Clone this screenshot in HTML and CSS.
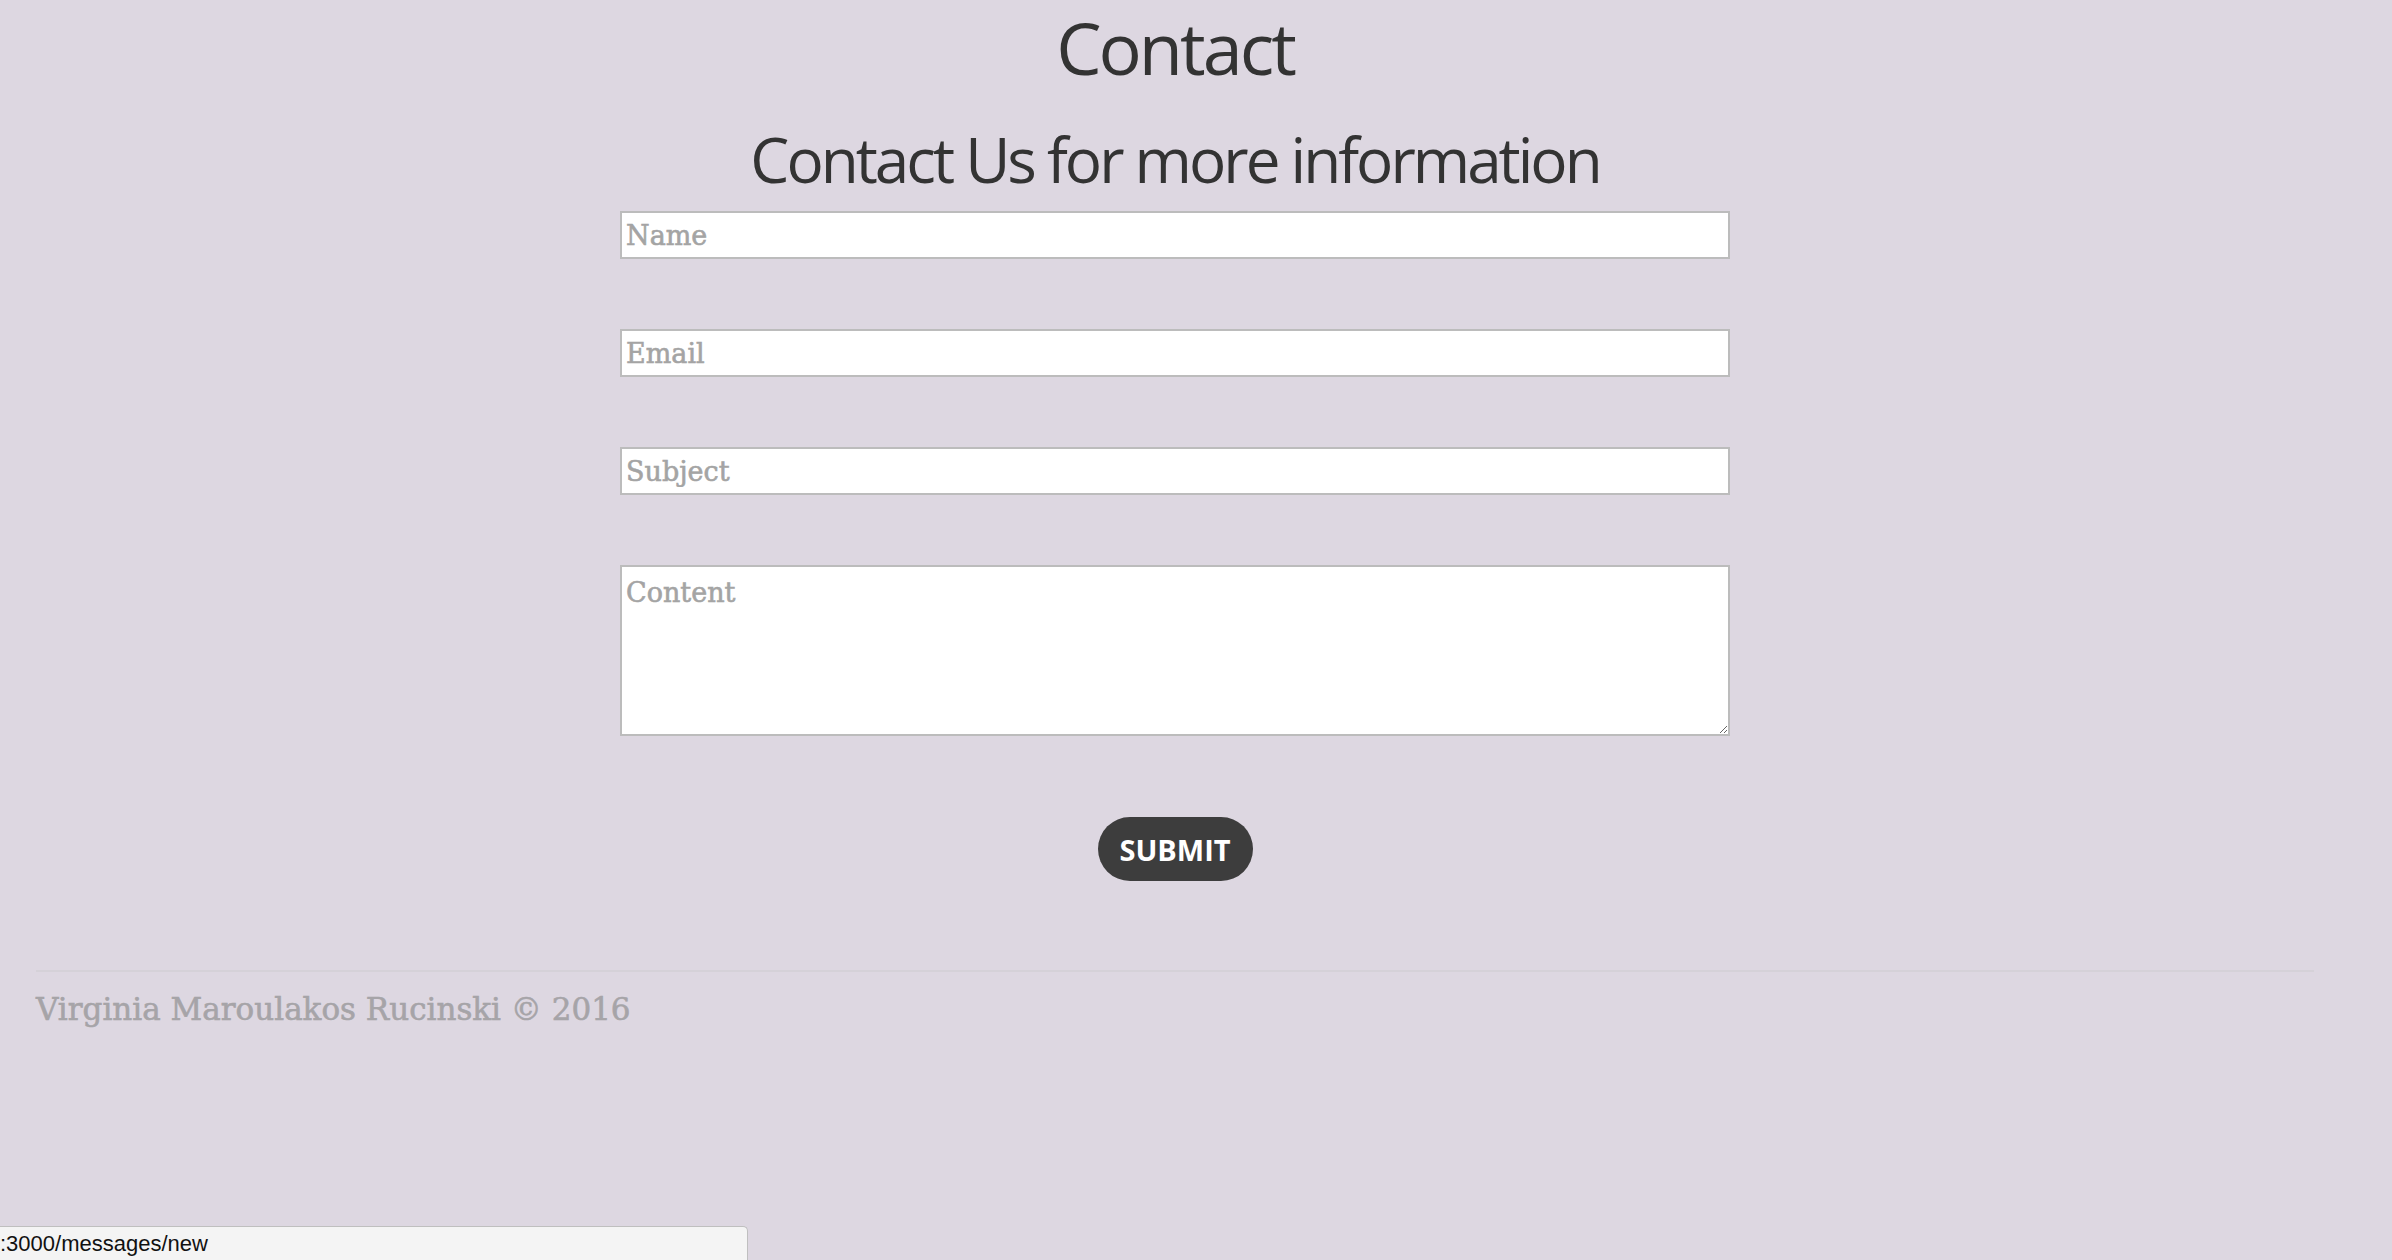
FILE: index.html
```html
<!DOCTYPE html>
<html>
<head>
<meta charset="utf-8">
<link rel="stylesheet" href="styles.css">
</head>
<body>
<div class="page">
  <main class="main">
    <h1 class="title">Contact</h1>
    <h2 class="subtitle">Contact Us for more information</h2>
    <form class="form">
      <input class="field" type="text" placeholder="Name">
      <input class="field" type="email" placeholder="Email">
      <input class="field" type="text" placeholder="Subject">
      <textarea class="field area" placeholder="Content"></textarea>
      <button class="submit" type="button">SUBMIT</button>
    </form>
  </main>
  <footer class="footer">
    <p class="copy">Virginia Maroulakos Rucinski © 2016</p>
  </footer>
</div>
<div class="status">:3000/messages/new</div>
</body>
</html>
```

FILE: styles.css
```css
html, body {
  margin: 0;
  padding: 0;
  background: #ddd7e1;
  height: 100%;
  overflow: hidden;
}
.page {
  width: 2350px;
}
.main {
  display: flex;
  flex-direction: column;
  align-items: center;
}
.title {
  margin: 0;
  font-family: "Open Sans", sans-serif;
  font-weight: 400;
  font-size: 72px;
  letter-spacing: -3px;
  line-height: 94px;
  color: #333333;
}
.subtitle {
  margin: 15px 0 0 0;
  font-family: "Open Sans", sans-serif;
  font-weight: 400;
  font-size: 62px;
  letter-spacing: -3px;
  line-height: 100px;
  color: #333333;
}
.form {
  display: flex;
  flex-direction: column;
  align-items: center;
  gap: 70px;
  margin-top: 2px;
}
.field {
  box-sizing: border-box;
  width: 1110px;
  height: 48px;
  margin: 0;
  border: 2px solid #bcbcbc;
  background: #ffffff;
  font-family: "DejaVu Serif", serif;
  font-size: 27px;
  padding: 0 4px;
  color: #333;
}
.field::placeholder {
  color: #a4a4a4;
  -webkit-text-stroke: 0.6px #a4a4a4;
}
.area {
  height: 171px;
  padding-top: 10px;
  resize: vertical;
}
.submit {
  margin-top: 11px;
  width: 155px;
  height: 64px;
  border: none;
  border-radius: 32px;
  background: #3d3d3d;
  color: #ffffff;
  font-family: "Open Sans", sans-serif;
  font-weight: 700;
  font-size: 29px;
  padding: 0;
}
.footer {
  margin: 89px 36px 0 36px;
  border-top: 2px solid #d5d1d8;
}
.copy {
  margin: 0;
  padding-top: 19px;
  font-family: "DejaVu Serif", serif;
  font-size: 31px;
  color: #a6a4a8;
  -webkit-text-stroke: 0.6px #a6a4a8;
}
.status {
  position: fixed;
  left: 0;
  bottom: 0;
  width: 748px;
  height: 34px;
  box-sizing: border-box;
  background: #f4f4f4;
  border: 1px solid #bfbfbf;
  border-left: none;
  border-bottom: none;
  border-top-right-radius: 5px;
  font-family: "Liberation Sans", sans-serif;
  font-size: 22px;
  line-height: 33px;
  color: #111;
}
```
